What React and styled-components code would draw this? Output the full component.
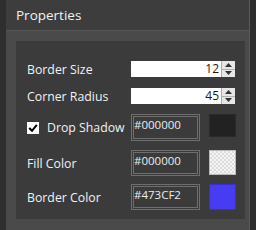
import React from 'react'
import styled, { createGlobalStyle } from 'styled-components'

const Global = createGlobalStyle`
    html, body {
        margin: 0;
        padding: 0;
        background: #2e2e2e;
        font-family: "Open Sans", "Noto Sans", sans-serif;
        overflow: hidden;
    }
`

const Window = styled.div`
    width: 256px;
    height: 230px;
    display: flex;
    padding-left: 6px;
    box-sizing: border-box;
`

const Panel = styled.div`
    width: 243px;
    display: flex;
    flex-direction: column;
    background: #4a4a4a;
    border-right: 1px solid #5a5a5a;
`

const Header = styled.div`
    height: 30px;
    background: #3d3d3d;
    border-bottom: 1px solid #555;
    display: flex;
    align-items: center;
    padding-left: 10px;
    color: #f2f2f2;
    font-size: 13.5px;
`

const Body = styled.div`
    padding: 10px 4px 0 10px;
`

const Group = styled.div`
    background: #3b3b3b;
    height: 178px;
    box-sizing: border-box;
    padding: 20px 0 0 11px;
    display: flex;
    flex-direction: column;
`

const Row = styled.div`
    display: flex;
    align-items: ${p => (p.$top ? 'flex-start' : 'center')};
    height: ${p => p.$h}px;
    margin-bottom: ${p => p.$mb}px;
`

const Label = styled.div`
    width: 104px;
    color: #f2f2f2;
    font-size: 12.3px;
    display: flex;
    align-items: center;
    gap: 8px;
    align-self: center;
`

const Check = styled.span`
    width: 12px;
    height: 12px;
    background: #fff;
    display: inline-flex;
    align-items: center;
    justify-content: center;
`

const Spin = styled.div`
    display: flex;
    height: 16px;
    width: 104px;
`

const NumInput = styled.div`
    flex: 1;
    background: #fff;
    color: #1a1a1a;
    font-size: 12px;
    text-align: right;
    line-height: 16px;
    padding-right: 2px;
`

const Arrows = styled.div`
    width: 14px;
    display: flex;
    flex-direction: column;
    background: #e6e6e6;
    border-left: 1px solid #aaa;
    box-sizing: border-box;
`

const Arrow = styled.div`
    flex: 1;
    display: flex;
    align-items: center;
    justify-content: center;
    & + & {
        border-top: 1px solid #b0b0b0;
    }
`

const HexBox = styled.div`
    width: 69px;
    height: ${p => p.$h}px;
    box-sizing: border-box;
    border: 3px double #6e6e6e;
    color: #ececec;
    font-size: 11.5px;
    line-height: 13px;
    padding: 1px 0 0 0;
`

const Swatch = styled.div`
    width: 27px;
    height: ${p => p.$h}px;
    margin-left: 9px;
    box-sizing: border-box;
    background: ${p => p.$c};
    border: 1px solid ${p => p.$b || '#2a2a2a'};
    ${p => p.$checker && `
        background-color: #f4f4f4;
        background-image:
            linear-gradient(45deg, #dcdcdc 25%, transparent 25%, transparent 75%, #dcdcdc 75%),
            linear-gradient(45deg, #dcdcdc 25%, transparent 25%, transparent 75%, #dcdcdc 75%);
        background-size: 4px 4px;
        background-position: 0 0, 2px 2px;
        border-color: #bbb;
    `}
`

const Up = () => (
    <svg width="7" height="4" viewBox="0 0 7 4"><path d="M0 4 L3.5 0 L7 4 Z" fill="#333" /></svg>
)
const Down = () => (
    <svg width="7" height="4" viewBox="0 0 7 4"><path d="M0 0 L3.5 4 L7 0 Z" fill="#333" /></svg>
)

const NumberRow = ({ label, value, mb }) => (
    <Row $h={16} $mb={mb}>
        <Label>{label}</Label>
        <Spin>
            <NumInput>{value}</NumInput>
            <Arrows>
                <Arrow><Up /></Arrow>
                <Arrow><Down /></Arrow>
            </Arrows>
        </Spin>
    </Row>
)

const App = () => {
    return (
        <Window>
            <Global />
            <Panel>
                <Header>Properties</Header>
                <Body>
                    <Group>
                        <NumberRow label="Border Size" value="12" mb={11} />
                        <NumberRow label="Corner Radius" value="45" mb={10} />
                        <Row $h={27} $mb={9} $top>
                            <Label>
                                <Check>
                                    <svg width="10" height="10" viewBox="0 0 10 10">
                                        <path d="M1.2 5 L4 7.8 L8.8 1.8" stroke="#000" strokeWidth="2" fill="none" />
                                    </svg>
                                </Check>
                                Drop Shadow
                            </Label>
                            <HexBox $h={27}>#000000</HexBox>
                            <Swatch $h={23} $c="#222" />
                        </Row>
                        <Row $h={26} $mb={8} $top>
                            <Label>Fill Color</Label>
                            <HexBox $h={26}>#000000</HexBox>
                            <Swatch $h={25} $checker />
                        </Row>
                        <Row $h={26} $mb={0} $top>
                            <Label>Border Color</Label>
                            <HexBox $h={26}>#473CF2</HexBox>
                            <Swatch $h={26} $c="#473cf2" $b="#3a30c8" />
                        </Row>
                    </Group>
                </Body>
            </Panel>
        </Window>
    )
}

export default App
